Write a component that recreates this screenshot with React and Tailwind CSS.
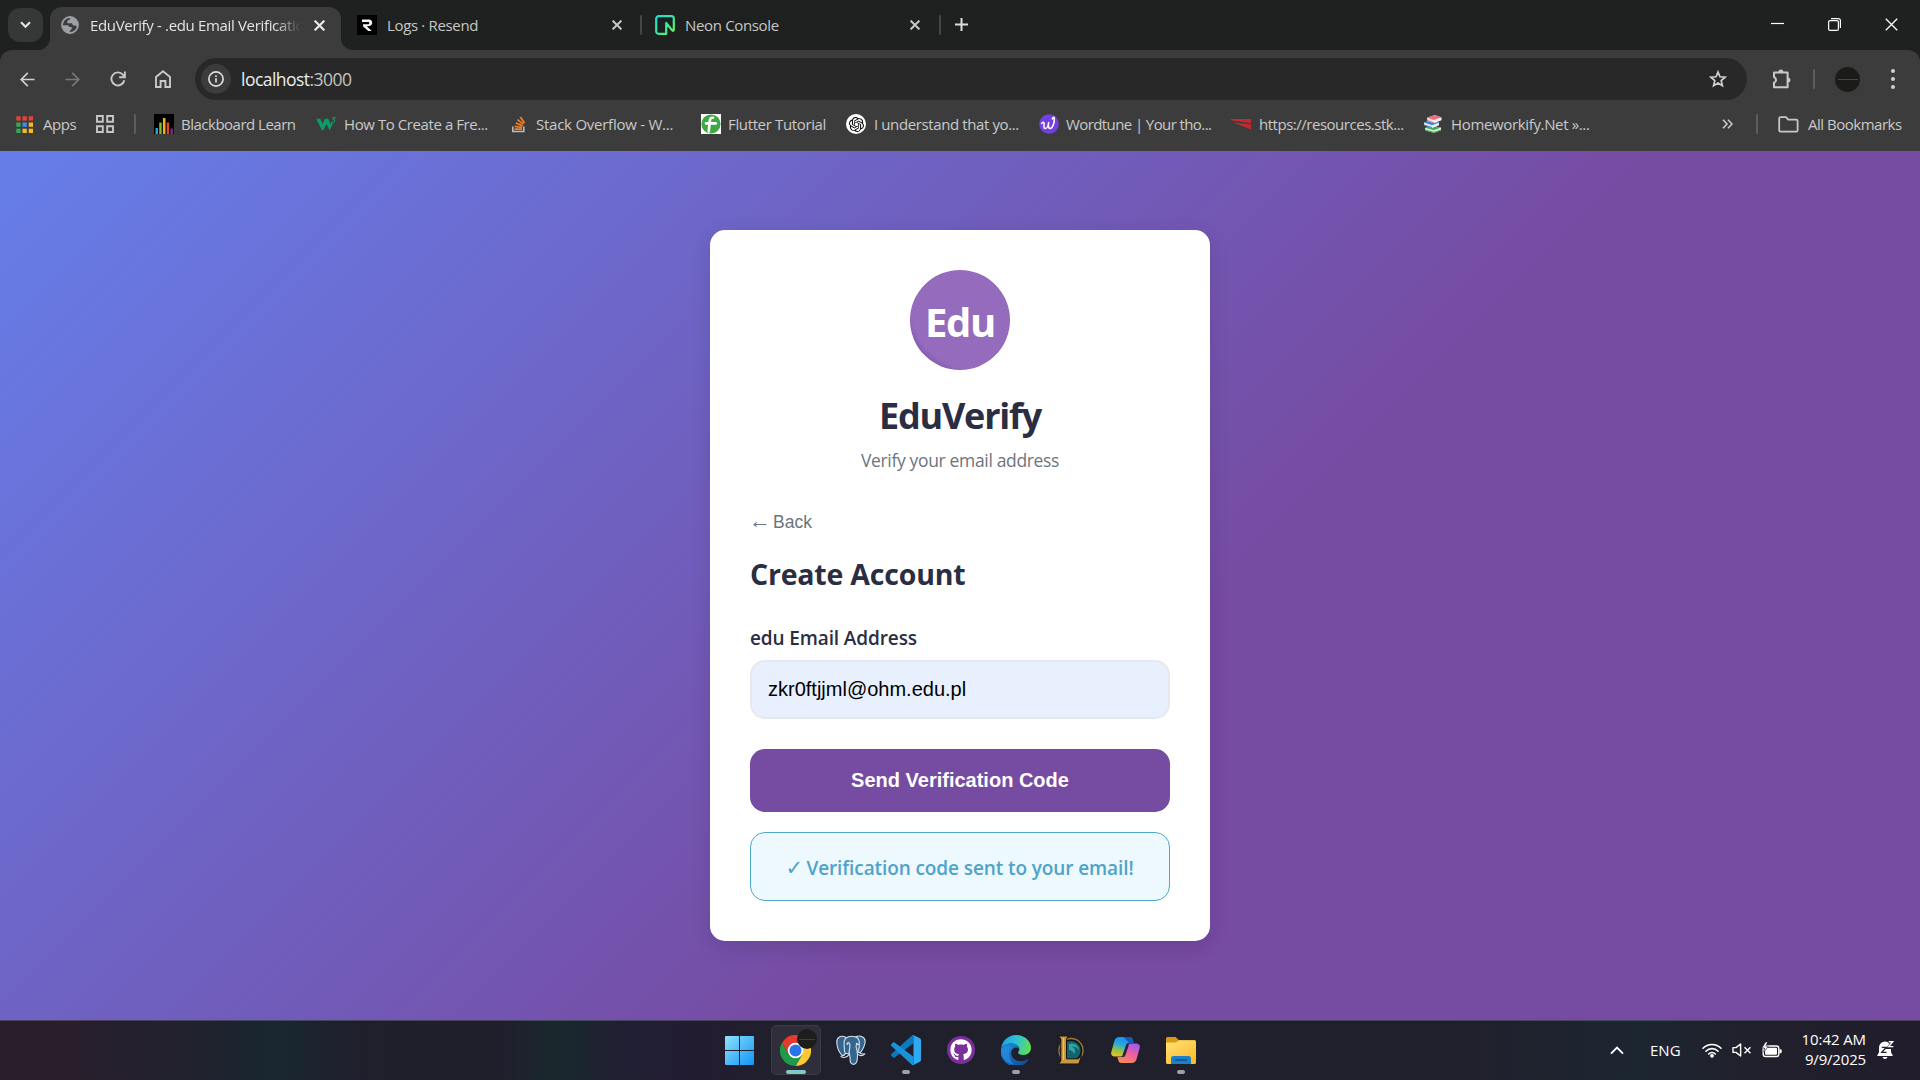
import React from 'react';
import { FaGithub } from 'react-icons/fa';
import { SiOpenai } from 'react-icons/si';

/* ---------- small line icons ---------- */
const Close = ({ className = 'size-[10px] text-[#dcdcdc]', w = 2 }) => (
  <svg viewBox="0 0 10 10" className={className} fill="none" stroke="currentColor" strokeWidth={w}>
    <path d="M0.6 0.6 9.4 9.4M9.4 0.6 0.6 9.4" />
  </svg>
);

const Globe = () => (
  <svg viewBox="0 0 18 18" className="size-[18px] shrink-0">
    <circle cx="9" cy="9" r="8" fill="#3c3c3c" stroke="#9aa0a6" strokeWidth="1.8" />
    <path d="M9.500 1 8.800 3.500 6.300 4.800v2.400h4.600l1.200 2.400h2.800l1.300 1.700A8 8 0 0 0 9.500 1z" fill="#9aa0a6" />
    <path d="M1.500 9.200h5.500l1.500 1.700h2.200v2.200l-2 2v1.800a8 8 0 0 1-7.200-7.700z" fill="#9aa0a6" />
  </svg>
);

const ResendIcon = () => (
  <svg viewBox="0 0 20 20" className="size-5">
    <rect width="20" height="20" fill="#000" />
    <path d="M5 4.500h7.200a3.300 3.300 0 0 1 .4 6.500l-2.800.3 5 4.700h-3.600L6 11.300V9.200h5.600a1.300 1.300 0 0 0 0-2.300H5z" fill="#f2f2f2" />
  </svg>
);

const NeonIcon = () => (
  <svg viewBox="0 0 20 20" className="size-5">
    <defs>
      <linearGradient id="neon" x1="0" y1="0" x2="1" y2="1">
        <stop offset="0" stopColor="#22dcd0" />
        <stop offset="0.55" stopColor="#3fe6a0" />
        <stop offset="1" stopColor="#63f655" />
      </linearGradient>
    </defs>
    <path d="M11.200 18.800H3.600a2.400 2.400 0 0 1-2.400-2.400V3.600a2.400 2.400 0 0 1 2.400-2.400h12.800a2.400 2.400 0 0 1 2.400 2.400v11.200c0 1-1 1.300-1.600.6L11.200 8z" fill="#1c1f1f" stroke="url(#neon)" strokeWidth="2.200" strokeLinejoin="round" />
  </svg>
);

const Back = ({ className }) => (
  <svg viewBox="0 0 16 16" className={className} fill="none" stroke="currentColor" strokeWidth="1.800">
    <path d="M15.500 8H1.500M8.300 1 1.300 8l7 7" />
  </svg>
);

const Reload = () => (
  <svg viewBox="0 0 16 16" className="size-4 text-[#c9c9c9]" fill="none" stroke="currentColor" strokeWidth="1.900">
    <path d="M14.300 9.200A6.500 6.500 0 1 1 12.900 3.700l1.600 1.900" />
    <path d="M14.900.4v5.900H9.200" />
  </svg>
);

const Home = () => (
  <svg viewBox="0 0 16 18" className="h-[18px] w-4 text-[#c9c9c9]" fill="none" stroke="currentColor" strokeWidth="1.900">
    <path d="M1 6.900 8 1.300l7 5.600V17h-4.600v-6H5.600v6H1z" />
  </svg>
);

const Star = () => (
  <svg viewBox="0 0 18 18" className="size-[18px] text-[#cfcfcf]" fill="none" stroke="currentColor" strokeWidth="1.700" strokeLinejoin="miter">
    <path d="m9 2 2 4.800 5.100.4-3.900 3.400 1.200 5.100L9 13l-4.400 2.700 1.200-5.100L1.900 7.200 7 6.800z" />
  </svg>
);

const Puzzle = () => (
  <svg viewBox="0 0 22 22" className="size-[22px] text-[#c9c9c9]">
    <path d="M3 4.500h13.600v14.800H3v-4.500a3.100 3.100 0 0 0 0-5.800z" fill="none" stroke="currentColor" strokeWidth="2" strokeLinejoin="round" />
    <path d="M7.400 4a2.500 2.500 0 0 1 5 0zM17 9.400a2.500 2.500 0 0 1 0 5z" fill="currentColor" />
  </svg>
);

/* ---------- bookmark favicons ---------- */
const APP_DOTS = [
  ['#ea4335', '#ea4335', '#ea4335'],
  ['#34a853', '#3b8ef0', '#f4b925'],
  ['#34a853', '#f4b925', '#f4b925'],
];
const AppsIcon = () => (
  <svg viewBox="0 0 17 17" className="size-[17px]">
    {APP_DOTS.map((row, r) =>
      row.map((c, i) => <rect key={`${r}${i}`} x={0.300 + i * 6.200} y={0.300 + r * 6.200} width="4.300" height="4.300" fill={c} />)
    )}
  </svg>
);

const GridIcon = () => (
  <svg viewBox="0 0 18 18" className="size-[18px] text-[#c7c7c7]" fill="none" stroke="currentColor" strokeWidth="1.900">
    <path d="M1 1h5.800v5.800H1zM11.200 1H17v5.800h-5.800zM1 11.200h5.800V17H1zM11.200 11.200H17V17h-5.800z" />
  </svg>
);

const Blackboard = () => (
  <svg viewBox="0 0 20 20" className="size-5">
    <rect width="20" height="20" fill="#000" />
    <path d="M1.500 14H4v6H1.500z" fill="#1ba7e0" />
    <path d="M5.200 8.500h2.500V20H5.200z" fill="#7cb832" />
    <path d="M8.900 4h2.600v16H8.900z" fill="#f2b01e" />
    <path d="M12.700 8.500h2.500V20h-2.500z" fill="#dd4b27" />
    <path d="M16.400 14.500h2.500V20h-2.500z" fill="#7a2a90" />
  </svg>
);

const W3 = () => (
  <svg viewBox="0 0 20 20" className="size-5">
    <path d="M.3 4.800h4L6.600 10 8.800 4.800h3.600L14.500 10l1.300-2.300 1.100 2-3.300 6.500L10.500 10l-3.300 6.200h-1.300z" fill="#0a9d68" />
    <path d="M16 3.800h2.900l-1.500 1.700c2 .2 1.800 2.800-.1 2.700-.8 0-1.300-.3-1.500-.8" fill="none" stroke="#0a9d68" strokeWidth="1.100" />
  </svg>
);

const StackOverflow = () => (
  <svg viewBox="0 0 20 20" className="size-5">
    <path d="M4.800 12.500v5h11v-5" fill="none" stroke="#bcbbbb" strokeWidth="1.600" />
    <g stroke="#f48024" strokeWidth="1.700" fill="none">
      <path d="M6.600 15.200h7.400M6.800 12.300l7.300 1.200M7.800 9l6.800 2.900M9.500 5.600l5.900 4.500M12.300 3l4.300 6" />
    </g>
  </svg>
);

const FlutterTut = () => (
  <svg viewBox="0 0 20 20" className="size-5">
    <rect width="20" height="20" fill="#fff" />
    <circle cx="10" cy="10" r="9.600" fill="#3fa845" />
    <path d="M12 3.800c-2-.4-3 1-3.200 3.200L7.700 17.500M5 9.400h9.800" fill="none" stroke="#fff" strokeWidth="2.600" strokeLinecap="round" />
  </svg>
);

const OpenAi = () => (
  <span className="flex size-5 items-center justify-center rounded-full bg-white text-black">
    <SiOpenai className="size-[15px]" />
  </span>
);

const Wordtune = () => (
  <svg viewBox="0 0 20 20" className="size-5">
    <circle cx="10" cy="10" r="9.800" fill="#7340e0" />
    <path d="M2.600 9.500c.8-1.600 2.600-1.800 2.500.2-.2 2.300-.6 4.700 1 4.800 1.900 0 3.200-3 3.600-6.500-.5 3.500-.5 6.700 1.400 6.600 2.700-.2 4.500-6.500 4.200-10.600-.3-1.600-1.700-.6-1.900 1" fill="none" stroke="#fff" strokeWidth="1.500" strokeLinecap="round" />
  </svg>
);

const RedMark = () => (
  <svg viewBox="0 0 20 20" className="size-5">
    <path d="M0 5h20v4.200L0 6.200zM1.500 8.200 20 10.400v5z" fill="#bf2a33" />
  </svg>
);

const Books = () => (
  <svg viewBox="0 0 20 20" className="size-5">
    <path d="m2 14 6-2.500 10 2v2.800L11 19l-8.500-2.500z" fill="#e9f4e7" />
    <path d="m2 13.700 6-2.200 10 2-7 2.700z" fill="#3eab52" />
    <path d="M2.500 16.500 11 19l7-2.700v-.9l-7 2.400-8.600-2.300z" fill="#3eab52" />
    <path d="m1 8.500 6-2 9 2v2.800l-7 2.600-7.500-2.600z" fill="#eaf2fb" />
    <path d="m1 8.500 6-2 9.500 2-7.500 2.700zM1.500 11.500l7.500 2.600v-1L2 10.700z" fill="#3a84c9" />
    <path d="M4 3.800 12 1l6.500 2.500v2.800L11 9.200 4.500 6.900z" fill="#fbe9ea" />
    <path d="M4 3.800 12 1l6.500 2.300L10.800 6zM4.500 7l6.500 2.300V8.200L4.500 6z" fill="#e5737c" />
  </svg>
);

const Folder = () => (
  <svg viewBox="0 0 21 17" className="h-[17px] w-[21px] text-[#c7c7c7]" fill="none" stroke="currentColor" strokeWidth="1.800" strokeLinejoin="round">
    <path d="M1.200 2.500a1.200 1.200 0 0 1 1.200-1.300H8l2.200 2.400h8a1.400 1.400 0 0 1 1.400 1.400v9.200a1.400 1.400 0 0 1-1.400 1.400H2.500a1.300 1.300 0 0 1-1.300-1.300z" />
  </svg>
);

const BOOKMARKS = [
  { icon: <Blackboard />, label: 'Blackboard Learn', box: 'w-[162px]', text: 'tracking-[-0.5px]' },
  { icon: <W3 />, label: 'How To Create a Fre...', box: 'w-[192px]', text: 'ml-px tracking-[-0.42px]' },
  { icon: <StackOverflow />, label: 'Stack Overflow - W...', box: 'w-[193px]', text: 'ml-px tracking-[-0.246px]' },
  { icon: <FlutterTut />, label: 'Flutter Tutorial', box: 'w-[145px]', text: 'tracking-[-0.36px]' },
  { icon: <OpenAi />, label: 'I understand that yo...', box: 'w-[193px]', text: 'ml-px tracking-[-0.39px]' },
  { icon: <Wordtune />, label: 'Wordtune | Your tho...', box: 'w-[192px]', text: 'tracking-[-0.594px]' },
  { icon: <RedMark />, label: 'https://resources.stk...', box: 'w-[192px]', text: 'ml-px tracking-[-0.48px]' },
  { icon: <Books />, label: 'Homeworkify.Net »...', box: 'w-[180px]', text: 'ml-px tracking-[-0.35px]' },
];

/* ---------- taskbar icons ---------- */
const WindowsIcon = () => (
  <svg viewBox="0 0 29 29" className="mr-[3px] size-[29px]">
    <defs>
      <linearGradient id="win" gradientUnits="userSpaceOnUse" x1="0" y1="0" x2="29" y2="29">
        <stop offset="0" stopColor="#8fe2fb" />
        <stop offset="1" stopColor="#0f94f5" />
      </linearGradient>
    </defs>
    <path d="M0 1a1 1 0 0 1 1-1h13v14H0zM15 0h13a1 1 0 0 1 1 1v13H15zM0 15h14v14H1a1 1 0 0 1-1-1zM15 15h14v13a1 1 0 0 1-1 1H15z" fill="url(#win)" />
  </svg>
);

const ChromeIcon = () => (
  <svg viewBox="0 0 48 48" className="size-[31px]">
    <path d="M24 12h20.800A24 24 0 0 1 24 48L34.400 30z" fill="#fcc934" />
    <path d="M13.600 30 3.200 12A24 24 0 0 0 24 48l10.400-18z" fill="#1e9a4b" />
    <path d="M24 12h20.800A24 24 0 0 0 3.200 12l10.400 18z" fill="#e33b2e" />
    <circle cx="24" cy="24" r="12" fill="#fff" />
    <circle cx="24" cy="24" r="9.300" fill="#2a74e8" />
  </svg>
);

const PostgresIcon = () => (
  <svg viewBox="0 0 30 31" className="h-[31px] w-[30px]" stroke="#d5e2ec" strokeWidth="1.100" strokeLinejoin="round" strokeLinecap="round">
    <path d="M10 2.500C5-.2.500 2 .8 7.500c.2 4 2.500 9.800 4.700 12.300 1.500 1.500 2.800.2 4.200-1.600l1.700-.5z" fill="#33658f" />
    <path d="M19.500 2c4.500-2.300 10-.2 9.600 5-.2 3.600-2.800 8-4.600 10.600l-5-.6z" fill="#33658f" />
    <path d="M10 3c3-2.400 8.500-2.400 11.500 0 2.600 2.200 2 6 1.600 9.500-.3 2.800-1.400 4.300-1.600 6.500-.2 3.500.2 7-1.500 9-1.500 1.900-4.800 1.900-5.500-.8-.8-3 0-6.200-1.300-9-3.300 1.400-5-.2-4.800-3.800.2-3-2-8.500 1.600-11.400z" fill="#33658f" />
    <path d="M12 7.200c2 .2 2 3 1.800 5-.2 2-.8 3.500-.6 6M22.500 9.500c-1.500-.6-2.600.2-2.400 2.200.2 2.500 1.600 3.600 1 6M21.800 19.400c2 1.500 5 1.400 7-.6-2.200.4-3.600.2-5-1M8 20.500c-1.400.3-2.400 0-3 1.100 2.300 1.400 5.800 1.200 8.300-2.200" fill="none" />
    <circle cx="11.400" cy="8.800" r="0.500" fill="#fff" />
    <circle cx="20.800" cy="8.800" r="0.500" fill="#fff" />
  </svg>
);

const VsCodeIcon = () => (
  <svg viewBox="0 0 24 24" className="size-[30px]">
    <path d="M18 6.550 2.930 18a1 1 0 0 1-1.280-.06L.33 16.740a1 1 0 0 1 0-1.480L16.500.5A1.490 1.490 0 0 1 18 .15z" fill="#0d78be" />
    <path d="M18 17.450 2.930 6a1 1 0 0 0-1.280.06L.33 7.260a1 1 0 0 0 0 1.480L16.500 23.500a1.490 1.490 0 0 0 1.500.35z" fill="#1a91d8" />
    <path d="M18.210.21 23.150 2.590A1.500 1.500 0 0 1 24 3.940V20.060a1.500 1.500 0 0 1-.85 1.350L18.210 23.790a1.490 1.490 0 0 1-1.710-.29c.550.500 1.500.1 1.500-.7V1.200c0-.8-.95-1.200-1.500-.7a1.490 1.490 0 0 1 1.710-.29z" fill="#2eaaf0" />
  </svg>
);

const GithubIcon = () => (
  <span className="flex size-7 items-center justify-center rounded-full bg-[#7b2f9b]">
    <FaGithub className="size-[22px] text-white" />
  </span>
);

const EdgeIcon = () => (
  <svg viewBox="0 0 30 30" className="ml-px size-[30px]">
    <defs>
      <linearGradient id="edgeTop" x1="0" y1="0.300" x2="1" y2="0.500">
        <stop offset="0" stopColor="#1f9fe0" />
        <stop offset="0.500" stopColor="#2fc3d6" />
        <stop offset="1" stopColor="#62dc4e" />
      </linearGradient>
      <linearGradient id="edgeLow" x1="0" y1="0" x2="0.800" y2="1">
        <stop offset="0" stopColor="#1b8fdd" />
        <stop offset="1" stopColor="#0d4e9c" />
      </linearGradient>
    </defs>
    <path d="M.3 13C1.200 5.500 7.500 0 15 0c8.500 0 15 6 15 12.800 0 4.400-3.300 7.200-7.400 7.200-3.500 0-5.600-1.400-5.600-2.500 0-.8 1.300-1.300 1.300-3.300 0-3-3.300-5.700-7.600-5.700C6 8.500 2 10.600.3 13z" fill="url(#edgeTop)" />
    <path d="M.2 13.200C1.700 10.500 5.500 8.300 10.300 8.300c3.900 0 7.900 2.500 8 5.700-1.400-1.600-4-2-6-.6-3 2.200-3 7.400.4 10.400 3.800 3.400 9.600 3 13.400.6.9-.5 1.500.1 1 .9A15 15 0 0 1 .2 13.200z" fill="url(#edgeLow)" />
    <path d="M10.300 12.200C6.500 16 7 24 13 29.800A15 15 0 0 1 .2 13.200c2.500-2.500 7-2.700 10.100-1z" fill="#2b8be0" opacity="0.700" />
  </svg>
);

const LeagueIcon = () => (
  <svg viewBox="0 0 30 30" className="size-[30px]">
    <circle cx="16" cy="15.500" r="12" fill="#0a1a22" stroke="#a5792f" strokeWidth="1.300" />
    <circle cx="16" cy="15.500" r="9.600" fill="#12636d" />
    <path d="M14 9c5-2 10 1.500 10 7-1-3-4-5-7-4 3 1 4 4 2 7-1-3-3-4-5-4z" fill="#2fa5a5" />
    <path d="M3.500 1h9.800l-1.800 3v19.800h11.800l3.200-3-2.700 8.200H3.500l2.300-3V4z" fill="#c8973f" stroke="#17120c" strokeWidth="1" />
    <path d="M8.500 3v22" stroke="#e6c276" strokeWidth="1.200" />
  </svg>
);

const CopilotIcon = () => (
  <svg viewBox="0 0 29 26" className="h-[26px] w-[29px]">
    <defs>
      <linearGradient id="copL" x1="0.600" y1="0" x2="0.300" y2="1">
        <stop offset="0" stopColor="#1c8cf0" />
        <stop offset="0.400" stopColor="#29a8e0" />
        <stop offset="0.700" stopColor="#8bc34a" />
        <stop offset="1" stopColor="#f0c11d" />
      </linearGradient>
      <linearGradient id="copR" x1="0.700" y1="0" x2="0.300" y2="1">
        <stop offset="0" stopColor="#a259ec" />
        <stop offset="0.500" stopColor="#ef5fa0" />
        <stop offset="1" stopColor="#f98a55" />
      </linearGradient>
    </defs>
    <path d="M8.500 0h10c2 0 2.800 1.200 3.300 3l.8 3h-4.800c-1.500 0-2 1-2.500 2.500l-2.300 8c-.6 2-1.600 3-3.500 3H3.600C.8 19.500-.3 17.500.3 15L3.400 4C4.200 1.300 5.800 0 8.500 0z" fill="url(#copL)" />
    <path d="M12.500 0h6c2 0 2.800 1.200 3.300 3l.8 3h-4.500z" fill="#1857b8" />
    <path d="M20.500 26h-10c-2 0-2.800-1.200-3.300-3l-.8-3h4.800c1.500 0 2-1 2.500-2.500l2.300-8c.6-2 1.600-3 3.500-3h5.900c2.800 0 3.900 2 3.300 4.500l-3.100 11c-.8 2.700-2.400 4-5.100 4z" fill="url(#copR)" />
    <path d="M16.500 8 12.800 18.500" stroke="#2b2140" strokeWidth="2.600" strokeLinecap="round" />
  </svg>
);

const ExplorerIcon = () => (
  <svg viewBox="0 0 30 27" className="ml-px h-[27px] w-[30px]">
    <defs>
      <linearGradient id="fold" x1="0" y1="0" x2="0.700" y2="1">
        <stop offset="0" stopColor="#ffe27a" />
        <stop offset="1" stopColor="#fcbd2c" />
      </linearGradient>
    </defs>
    <path d="M0 1.500A1.500 1.500 0 0 1 1.500 0h8L13 3.300h15.500A1.500 1.500 0 0 1 30 4.800V9H0z" fill="#d99a12" />
    <path d="M0 5.500h9.700L13 3.200h15.500A1.500 1.500 0 0 1 30 4.700V25.500A1.500 1.500 0 0 1 28.500 27h-27A1.500 1.500 0 0 1 0 25.500z" fill="url(#fold)" />
    <path d="M5 27v-5.500A2.500 2.500 0 0 1 7.500 19h15a2.500 2.500 0 0 1 2.500 2.500V27z" fill="#1b7fc9" />
    <path d="M9.500 23h11" stroke="#0c4f87" strokeWidth="1.600" strokeLinecap="round" />
  </svg>
);

const TASKS = [
  { id: 'start', icon: <WindowsIcon /> },
  { id: 'chrome', icon: <ChromeIcon />, active: true },
  { id: 'postgres', icon: <PostgresIcon /> },
  { id: 'code', icon: <VsCodeIcon />, running: true },
  { id: 'github', icon: <GithubIcon /> },
  { id: 'edge', icon: <EdgeIcon />, running: true },
  { id: 'league', icon: <LeagueIcon /> },
  { id: 'copilot', icon: <CopilotIcon /> },
  { id: 'explorer', icon: <ExplorerIcon />, running: true },
];

const Task = ({ icon, active, running }) => (
  <div className="relative flex h-[60px] w-[55px] items-center justify-center">
    {active && <span className="absolute top-[5px] left-[3px] h-[50px] w-[50px] rounded-[5px] border border-[#3b3946] bg-[#302e3b]" />}
    <span className="relative flex">{icon}</span>
    {active && (
      <span className="absolute top-[9px] left-[29px] flex size-5 items-center justify-center rounded-full bg-[#1d1e1c]">
        <span className="h-px w-4 bg-[#3d403a]" />
      </span>
    )}
    {active && <span className="absolute top-[50px] left-[18px] h-1 w-5 rounded-full bg-[#80cbc4]" />}
    {running && <span className="absolute top-[50px] left-[24px] h-1 w-2 rounded-full bg-[#a09fa6]" />}
  </div>
);

/* ---------- browser chrome ---------- */
const TabStrip = () => (
  <div className="flex h-[50px] items-start bg-[#1f2020] text-[15px] text-[#c7c7c7]">
    <button className="mt-2 ml-2 flex h-[34px] w-[35px] items-center justify-center rounded-xl bg-[#363737]">
      <svg viewBox="0 0 11 8" className="h-2 w-[11px]" fill="none" stroke="#e3e3e3" strokeWidth="2.200">
        <path d="M1 1.300 5.500 5.800 10 1.300" />
      </svg>
    </button>
    <svg viewBox="0 0 12 12" className="mt-[38px] -ml-[5px] size-3 shrink-0"><path d="M12 0v12H0A12 12 0 0 0 12 0z" fill="#3c3c3c" /></svg>
    <div className="mt-[7px] flex h-[43px] w-[291px] shrink-0 items-center rounded-t-xl bg-[#3c3c3c] pb-[7px] pl-[11px]">
      <Globe />
      <span className="ml-[11px] w-[211px] overflow-hidden mask-r-from-88% tracking-[-0.340px] whitespace-nowrap text-[#e3e3e3]">EduVerify - .edu Email Verification</span>
      <Close className="ml-[13px] size-[11px] shrink-0 text-[#e8e8e8]" />
    </div>
    <svg viewBox="0 0 12 12" className="mt-[38px] size-3 shrink-0"><path d="M0 0v12h12A12 12 0 0 1 0 0z" fill="#3c3c3c" /></svg>
    <div className="mt-[7px] flex h-9 w-[288px] shrink-0 items-center pl-[4px]">
      <ResendIcon />
      <span className="ml-[10px] w-[224px] tracking-[-0.34px] whitespace-nowrap">Logs · Resend</span>
      <Close className="ml-px size-[10px] shrink-0 text-[#c7c7c7]" />
    </div>
    <span className="mt-[15px] -ml-px h-5 w-[2px] rounded bg-[#444545]" />
    <div className="mt-[7px] flex h-9 w-[297px] shrink-0 items-center pl-[13px]">
      <NeonIcon />
      <span className="ml-[10px] w-[224px] tracking-[-0.34px] whitespace-nowrap">Neon Console</span>
      <Close className="ml-px size-[10px] shrink-0 text-[#c7c7c7]" />
    </div>
    <span className="mt-[15px] h-5 w-[2px] rounded bg-[#444545]" />
    <svg viewBox="0 0 13 13" className="mt-[18px] ml-[14px] size-[13px]" stroke="#dedede" strokeWidth="2"><path d="M6.500 0v13M0 6.500h13" /></svg>
    <div className="mt-[18px] mr-[22px] ml-auto flex items-center gap-[44px] text-white">
      <svg viewBox="0 0 13 13" className="size-[13px]" stroke="currentColor" strokeWidth="1.200"><path d="M0 5.500h13" /></svg>
      <svg viewBox="0 0 13 13" className="size-[13px]" fill="none" stroke="currentColor" strokeWidth="1.200">
        <rect x="0.600" y="2.600" width="9.800" height="9.800" rx="1.500" />
        <path d="M3 .6h7.400a2 2 0 0 1 2 2V10" />
      </svg>
      <Close className="size-[13px]" w={1} />
    </div>
  </div>
);

const Toolbar = () => (
  <div className="flex h-[58px] items-center bg-[#1f2020]">
    <div className="flex h-full w-full items-center rounded-t-xl bg-[#3c3c3c]">
      <Back className="ml-5 size-[15px] text-[#d0d0d0]" />
      <Back className="ml-[30px] size-[15px] rotate-180 text-[#787878]" />
      <span className="ml-[29.500px] flex"><Reload /></span>
      <span className="ml-[29px] flex"><Home /></span>
      <div className="ml-[24.500px] flex h-[42px] w-[1552px] items-center rounded-full bg-[#282828] pl-[6px]">
        <span className="flex size-[30px] items-center justify-center rounded-full bg-[#3c3c3c]">
          <svg viewBox="0 0 16 16" className="size-4" fill="none" stroke="#dcdcdc" strokeWidth="1.700">
            <circle cx="8" cy="8" r="7.100" />
            <path d="M8 7.200v4.300M8 4.200v1.700" />
          </svg>
        </span>
        <span className="ml-[10px] text-[17.500px] tracking-[-0.532px] text-[#ececec]">
          localhost<span className="text-[#c4c4c4]">:3000</span>
        </span>
        <span className="mr-[20px] ml-auto flex"><Star /></span>
      </div>
      <span className="ml-6 flex"><Puzzle /></span>
      <span className="ml-5 h-5 w-[2px] rounded bg-[#5d5d5d]" />
      <span className="ml-5 flex size-[25px] items-center justify-center rounded-full bg-[#1b1c1a]"><span className="h-px w-5 bg-[#454a42]" /></span>
      <span className="ml-[30.500px] flex flex-col gap-[4px]">
        <i className="size-1 rounded-full bg-[#d0d0d0]" />
        <i className="size-1 rounded-full bg-[#d0d0d0]" />
        <i className="size-1 rounded-full bg-[#d0d0d0]" />
      </span>
    </div>
  </div>
);

const BookmarkBar = () => (
  <div className="flex h-[43px] items-center bg-[#3c3c3c] pb-[11px] text-[15px] whitespace-nowrap text-[#c9c9c9]">
    <span className="ml-4 flex"><AppsIcon /></span>
    <span className="ml-[10px] w-[53px] tracking-[-0.446px]">Apps</span>
    <GridIcon />
    <span className="ml-5 h-5 w-[2px] rounded bg-[#5d5d5d]" />
    <div className="ml-[18px] flex">
      {BOOKMARKS.map((b) => (
        <div key={b.label} className={`flex shrink-0 items-center gap-[7px] ${b.box}`}>
          {b.icon}
          <span className={b.text}>{b.label}</span>
        </div>
      ))}
    </div>
    <svg viewBox="0 0 11 10" className="mr-[23px] ml-auto h-[10px] w-[11px]" fill="none" stroke="#c9c9c9" strokeWidth="1.600">
      <path d="m1 .8 4 4.200-4 4.200M6 .8 10 5 6 9.200" />
    </svg>
    <span className="mr-5 h-5 w-[2px] rounded bg-[#5d5d5d]" />
    <Folder />
    <span className="mr-[17px] ml-[9px] w-[95px] tracking-[-0.484px]">All Bookmarks</span>
  </div>
);

/* ---------- page ---------- */
const Card = () => (
  <div className="flex w-[500px] flex-col rounded-[15px] bg-white p-10 shadow-[0_5px_20px_rgba(0,0,0,0.12)]">
    <div className="flex size-[100px] items-center justify-center self-center rounded-full bg-[radial-gradient(circle_at_64%_36%,#946bbd_63px,#835aae_71px)] pt-1 text-[40px] leading-none font-bold tracking-[-1.300px] text-white">
      Edu
    </div>
    <h1 className="mt-[22px] h-12 text-center text-[36px] leading-[48px] font-bold tracking-[-1.250px] text-[#2b2d42]">EduVerify</h1>
    <p className="mt-2 h-6 text-center text-[17.500px] leading-6 tracking-[-0.340px] text-[#6c757d]">Verify your email address</p>
    <button className="mt-[38px] flex h-6 self-start font-['Liberation_Sans',Arial,sans-serif] text-[17.500px] leading-6 text-[#6c757d]">
      <span className="-ml-[3px] w-[26px] text-[22px] leading-[22px]">←</span>
      <span>Back</span>
    </button>
    <h2 className="mt-5 h-10 text-[28.500px] leading-10 font-bold tracking-[-0.200px] text-[#2b2d42]">Create Account</h2>
    <label className="mt-8 h-6 text-[19px] leading-6 font-semibold tracking-[-0.120px] text-[#2b2d42]">edu Email Address</label>
    <div className="mt-[10px] flex h-[59px] items-center rounded-[15px] border-2 border-[#e5e9ef] bg-[#e8f0fe] px-4 pb-[2px] font-['Liberation_Sans',Arial,sans-serif] text-[20px] text-black">
      zkr0ftjjml@ohm.edu.pl
    </div>
    <button className="mt-[30px] h-[63px] rounded-[15px] bg-[#764ba2] pb-[2px] font-['Liberation_Sans',Arial,sans-serif] text-[20px] font-bold text-white">
      Send Verification Code
    </button>
    <div className="mt-5 flex h-[69px] items-center justify-center rounded-[15px] border border-[#4ea8c8] bg-[#edf9fd] pt-[3px] text-[19px] font-semibold text-[#4ea3cb]">
      <span className="mr-[4px] -ml-px w-[17px] font-['DejaVu_Sans',sans-serif] text-[21px] leading-6 font-normal">✓</span>
      <span className="tracking-[-0.097px]">Verification code sent to your email!</span>
    </div>
  </div>
);

const Tray = () => (
  <div className="flex h-full items-center justify-end pr-[26px] text-[15px] text-white">
    <svg viewBox="0 0 14 9" className="h-[9px] w-[14px]" fill="none" stroke="currentColor" strokeWidth="1.900"><path d="M1 7.700 7 1.500l6 6.200" /></svg>
    <span className="ml-[26px] w-[29px]">ENG</span>
    <svg viewBox="0 0 20 16" className="ml-[23px] h-4 w-5" fill="none" stroke="currentColor" strokeWidth="1.600" strokeLinecap="round">
      <path d="M1 6.200a12.700 12.700 0 0 1 18 0M3.900 9.200a8.600 8.600 0 0 1 12.200 0M6.700 12a4.700 4.700 0 0 1 6.600 0" />
      <circle cx="10" cy="13.800" r="1.100" fill="currentColor" />
    </svg>
    <svg viewBox="0 0 20 16" className="ml-[10px] h-4 w-5" fill="none" stroke="currentColor" strokeWidth="1.400" strokeLinejoin="round">
      <path d="M1 5.600h3L8.600 2v12L4 10.400H1z" />
      <path d="m12.500 5.200 6 6M18.500 5.200l-6 6" />
    </svg>
    <svg viewBox="0 0 20 16" className="ml-[10px] h-4 w-5">
      <rect x="1.200" y="4" width="15.600" height="10.500" rx="2.300" fill="none" stroke="currentColor" strokeWidth="1.400" />
      <rect x="3" y="5.800" width="12" height="7" rx="1" fill="currentColor" />
      <path d="M17.500 7.200h1a1.200 1.200 0 0 1 1.200 1.200v1.600a1.200 1.200 0 0 1-1.200 1.200h-1z" fill="currentColor" />
      <path d="M3.500 0 0 6h2.600L1.800 10.200 6.400 4.200H3.800L5.600 0z" fill="currentColor" stroke="#20202c" strokeWidth="0.600" />
    </svg>
    <div className="mr-[11px] ml-[18px] flex w-[66px] -translate-y-px flex-col items-end text-[15px] leading-5">
      <span className="tracking-[-0.090px]">10:42 AM</span>
      <span className="tracking-[-0.170px]">9/9/2025</span>
    </div>
    <svg viewBox="0 0 17 20" className="h-5 w-[17px]">
      <path d="M8 1.500A6 6 0 0 0 2 7.500v4.800L.4 15.200c-.2.500 0 .9.600.9h14c.6 0 .8-.4.600-.9L14 12.300V7.500A6 6 0 0 0 8 1.500zM5.500 17a2.600 2.600 0 0 0 5 0z" fill="currentColor" />
      <path d="M11.500 1.800h4.300l-4.300 5.600h5" fill="none" stroke="#20202c" strokeWidth="3" />
      <path d="M4.800 7.300h4.400l-4.400 5h4.800" fill="none" stroke="#20202c" strokeWidth="1.300" />
      <path d="M11.700 1.800h4l-4 4.800h4.600" fill="none" stroke="currentColor" strokeWidth="1.400" />
    </svg>
  </div>
);

export default function App() {
  return (
    <div className="flex h-[1080px] w-[1920px] flex-col overflow-hidden font-['Open_Sans','Noto_Sans',sans-serif]">
      <header>
        <TabStrip />
        <Toolbar />
        <BookmarkBar />
      </header>
      <main className="flex flex-1 items-center justify-center bg-[linear-gradient(135deg,#667eea_0%,#764ba2_60%)]">
        <Card />
      </main>
      <footer className="grid h-[60px] grid-cols-[1fr_495px_1fr] bg-[linear-gradient(90deg,#281e2c_0px,#281e2c_80px,#21212c_170px,#192630_280px,#201f2c_370px,#1f1f2c_500px,#19282c_560px,#201f32_620px,#231c32_690px,#20202c_780px,#20202c_1450px,#1c2630_1640px,#21202c_1760px,#211d2c_1920px)] shadow-[inset_0_1px_0_rgba(160,150,200,0.3)]">
        <div />
        <div className="flex pl-px">
          {TASKS.map((t) => <Task key={t.id} {...t} />)}
        </div>
        <Tray />
      </footer>
    </div>
  );
}
